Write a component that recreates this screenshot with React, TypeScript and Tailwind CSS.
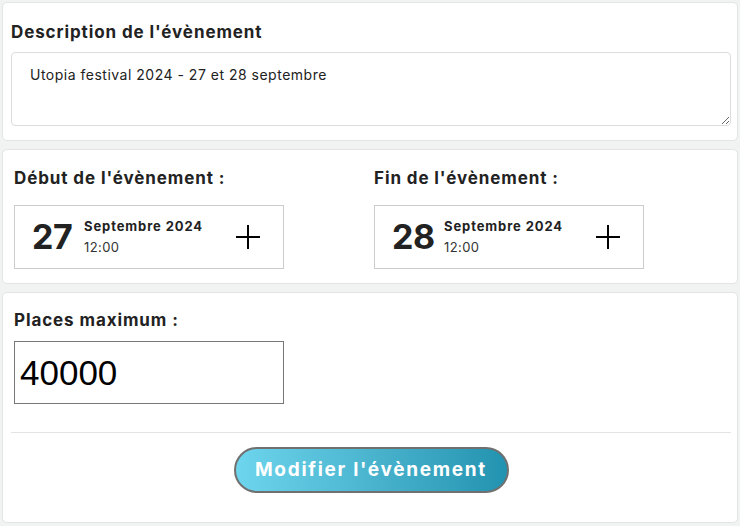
import React from "react";

const font = { fontFamily: "Inter, 'Noto Sans', sans-serif" };

function DateBox({ day, month, time }: { day: string; month: string; time: string }) {
  return (
    <div className="flex h-[64px] w-[270px] items-center border border-[#cccccc] bg-white pl-[17px]">
      <div className="w-[52px] text-[34px] font-bold leading-none tracking-[-0.3px] text-[#222222]">{day}</div>
      <div className="mb-[3px] flex w-[151px] flex-col">
        <span className="text-[13px] font-bold leading-[18px] tracking-[0.9px] text-[#222222]">{month}</span>
        <span className="mt-[4px] text-[13px] leading-[16px] tracking-[0.4px] text-[#333333]">{time}</span>
      </div>
      <svg width="26" height="26" viewBox="0 0 26 26" className="text-black">
        <path d="M13 1v24M1 13h24" stroke="currentColor" strokeWidth="2" />
      </svg>
    </div>
  );
}

export default function App() {
  return (
    <div className="flex min-h-[526px] w-[740px] flex-col gap-[8px] bg-[#f1f2f2] p-[2px]" style={font}>
      {/* description */}
      <section className="rounded-[5px] border border-[#e3e4e5] bg-white pl-[8px] pr-[6px] pt-[17px] pb-[14px]">
        <h2 className="mb-[8px] text-[17px] font-bold leading-[24px] tracking-[0.9px] text-[#222222]">Description de l'évènement</h2>
        <textarea
          className="block h-[74px] w-full resize-y rounded-[4px] border border-[#dcdddf] px-[18px] py-[12px] text-[14px] leading-[20px] tracking-[0.5px] text-[#222222] outline-none"
          defaultValue="Utopia festival 2024 - 27 et 28 septembre"
          style={font}
        />
      </section>

      {/* dates */}
      <section className="grid h-[135px] grid-cols-2 rounded-[5px] border border-[#e3e4e5] bg-white px-[11px] pt-[16px]">
        <div>
          <h2 className="mb-[15px] text-[17px] font-bold leading-[24px] tracking-[0.9px] text-[#222222]">Début de l'évènement :</h2>
          <DateBox day="27" month="Septembre 2024" time="12:00" />
        </div>
        <div className="pl-[4px]">
          <h2 className="mb-[15px] text-[17px] font-bold leading-[24px] tracking-[0.9px] text-[#222222]">Fin de l'évènement :</h2>
          <DateBox day="28" month="Septembre 2024" time="12:00" />
        </div>
      </section>

      {/* places + submit */}
      <section className="flex h-[231px] flex-col rounded-[5px] border border-[#e3e4e5] bg-white pl-[8px] pr-[6px] pt-[15px]">
        <div className="px-[3px]">
          <h2 className="mb-[9px] text-[17px] font-bold leading-[24px] tracking-[0.9px] text-[#222222]">Places maximum :</h2>
          <input
            className="block h-[63px] w-[270px] border border-[#777777] px-[5px] text-[35px] text-black outline-none"
            defaultValue="40000"
            style={{ fontFamily: "'Liberation Sans', Arial, sans-serif" }}
          />
        </div>
        <div className="mt-[28px] border-t border-[#e3e4e5] pt-[14px]">
          <div className="flex justify-center">
            <button
              type="button"
              className="h-[46px] w-[275px] rounded-full border-2 border-[#707070] bg-gradient-to-r from-[#6dd5ed] to-[#2193b0] text-[19px] font-bold tracking-[1.7px] text-white"
            >
              Modifier l'évènement
            </button>
          </div>
        </div>
      </section>
    </div>
  );
}
